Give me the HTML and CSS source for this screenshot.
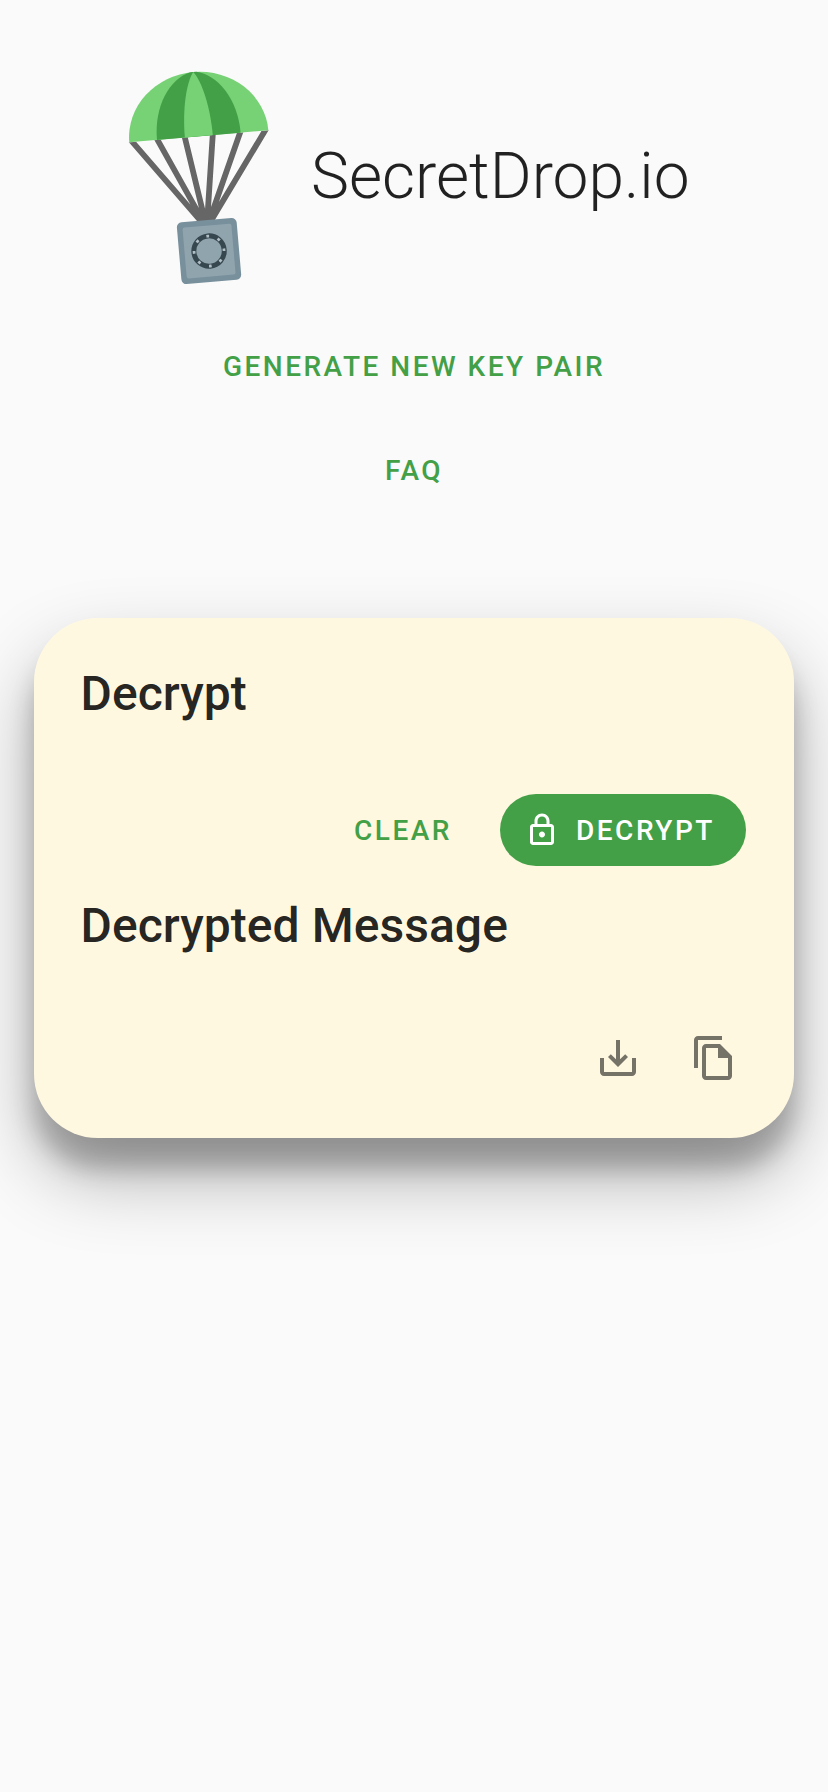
FILE: index.html
```html
<!DOCTYPE html>
<html lang="en">
<head>
<meta charset="utf-8">
<title>SecretDrop.io</title>
<link rel="stylesheet" href="styles.css">
</head>
<body>
<header class="header">
  <svg class="logo" viewBox="128 70 142 216" aria-hidden="true">
    <defs>
      <clipPath id="below-canopy"><rect x="-80" y="0" width="160" height="100"/></clipPath>
    </defs>
    <g transform="translate(198.8 136.3) rotate(-4.95)">
      <g clip-path="url(#below-canopy)">
        <path class="cords" d="M-69.4-4 0 92M-43.2-4 0 92M-14.6-4 0 92M14.6-4 0 92M43.2-4 0 92M69.4-4 0 92"/>
      </g>
      <path class="canopy" d="M-69.8 0A69.8 64.5 0 0 1 69.8 0Z"/>
      <path class="canopy-dark" d="M-42 0C-42-34-24-60-3-64.5H3C24-60 42-34 42 0Z"/>
      <path class="canopy" d="M-14 0C-14-28-8-54 0-64.5C8-54 14-28 14 0Z"/>
      <g transform="translate(.3 115.2)">
        <rect class="safe" x="-30" y="-31" width="60" height="62" rx="5"/>
        <rect class="safe-door" x="-24.5" y="-25.5" width="49" height="51" rx="2"/>
        <circle class="dial" r="15.2"/>
        <circle class="dial-dots" r="15" pathLength="80"/>
      </g>
    </g>
  </svg>
  <h1 class="brand">SecretDrop.io</h1>
</header>
<nav class="nav">
  <a class="button">GENERATE NEW KEY PAIR</a>
  <a class="button">FAQ</a>
</nav>
<main class="card">
  <h2 class="heading">Decrypt</h2>
  <div class="actions">
    <button class="button">CLEAR</button>
    <button class="button button-filled">
      <svg class="icon-small" viewBox="0 0 24 24"><path d="M18 8h-1V6c0-2.76-2.24-5-5-5S7 3.24 7 6v2H6c-1.1 0-2 .9-2 2v10c0 1.1.9 2 2 2h12c1.1 0 2-.9 2-2V10c0-1.1-.9-2-2-2zM9 6c0-1.66 1.34-3 3-3s3 1.34 3 3v2H9V6zm9 14H6V10h12v10zm-6-3c1.1 0 2-.9 2-2s-.9-2-2-2-2 .9-2 2 .9 2 2 2z"/></svg>
      DECRYPT
    </button>
  </div>
  <h2 class="heading">Decrypted Message</h2>
  <div class="tools">
    <button class="icon-button" aria-label="Download"><svg class="icon" viewBox="0 0 24 24"><path d="M19 12v7H5v-7H3v7c0 1.1.9 2 2 2h14c1.1 0 2-.9 2-2v-7h-2zm-6 .67l2.59-2.58L17 11.5l-5 5-5-5 1.41-1.41L11 12.67V3h2v9.67z"/></svg></button>
    <button class="icon-button" aria-label="Copy"><svg class="icon" viewBox="0 0 24 24"><path d="M16 1H4c-1.1 0-2 .9-2 2v14h2V3h12V1zm-1 4H8c-1.1 0-1.99.9-1.99 2L6 21c0 1.1.89 2 1.99 2H19c1.1 0 2-.9 2-2V11l-6-6zM8 21V7h6v5h5v9H8z"/></svg></button>
  </div>
</main>
</body>
</html>
```
FILE: styles.css
```css
* {
  box-sizing: border-box;
}

body {
  min-height: 100vh;
  margin: 0;
  background: #fafafa;
  color: rgba(0, 0, 0, 0.87);
  font-family: Roboto, sans-serif;
}

.header {
  display: flex;
  align-items: center;
  gap: 41px;
  padding: 70px 0 0 128px;
}

.logo {
  width: 142px;
  height: 216px;
}

.cords {
  fill: none;
  stroke: #666;
  stroke-width: 5.8;
}

.canopy {
  fill: #76d275;
}

.canopy-dark {
  fill: #43a047;
}

.safe {
  fill: #78909c;
}

.safe-door {
  fill: #90a4ae;
}

.dial {
  fill: none;
  stroke: #37474f;
  stroke-width: 5;
}

.dial-dots {
  fill: none;
  stroke: #b0bec5;
  stroke-width: 2.8;
  stroke-dasharray: 2.4 7.6;
  stroke-dashoffset: 1.2;
}

.brand {
  margin: 0;
  padding-bottom: 2px;
  font-size: 64px;
  font-weight: 300;
  line-height: 76px;
}

.nav {
  display: flex;
  flex-direction: column;
  align-items: center;
  gap: 32px;
  padding-top: 44px;
}

.button {
  display: flex;
  align-items: center;
  height: 72px;
  padding: 0 16px;
  border: 0;
  border-radius: 36px;
  background: none;
  color: #43a047;
  font-family: inherit;
  font-size: 28px;
  font-weight: 500;
  letter-spacing: 2.5px;
}

.button-filled {
  gap: 16px;
  width: 246px;
  padding: 0 24px;
  background: #43a047;
  color: #fff;
}

.card {
  height: 520px;
  margin: 112px 34px 0;
  padding: 44px 32px 32px;
  border-radius: 64px;
  background: #fff8e1;
  box-shadow: 0 38px 76px rgba(0, 0, 0, 0.3), 0 30px 24px rgba(0, 0, 0, 0.22);
}

.heading {
  margin: 0;
  padding-left: 14.5px;
  font-size: 48px;
  font-weight: 500;
  letter-spacing: 0.05px;
  line-height: 64px;
}

.actions {
  display: flex;
  justify-content: flex-end;
  gap: 32px;
  padding: 68px 16px 28px 0;
}

.tools {
  display: flex;
  justify-content: flex-end;
  padding-top: 52px;
}

.icon-button {
  padding: 24px;
  border: 0;
  background: none;
  color: rgba(0, 0, 0, 0.54);
}

.icon,
.icon-small {
  display: block;
  fill: currentColor;
}

.icon {
  width: 48px;
  height: 48px;
}

.icon-small {
  width: 36px;
  height: 36px;
}
```
